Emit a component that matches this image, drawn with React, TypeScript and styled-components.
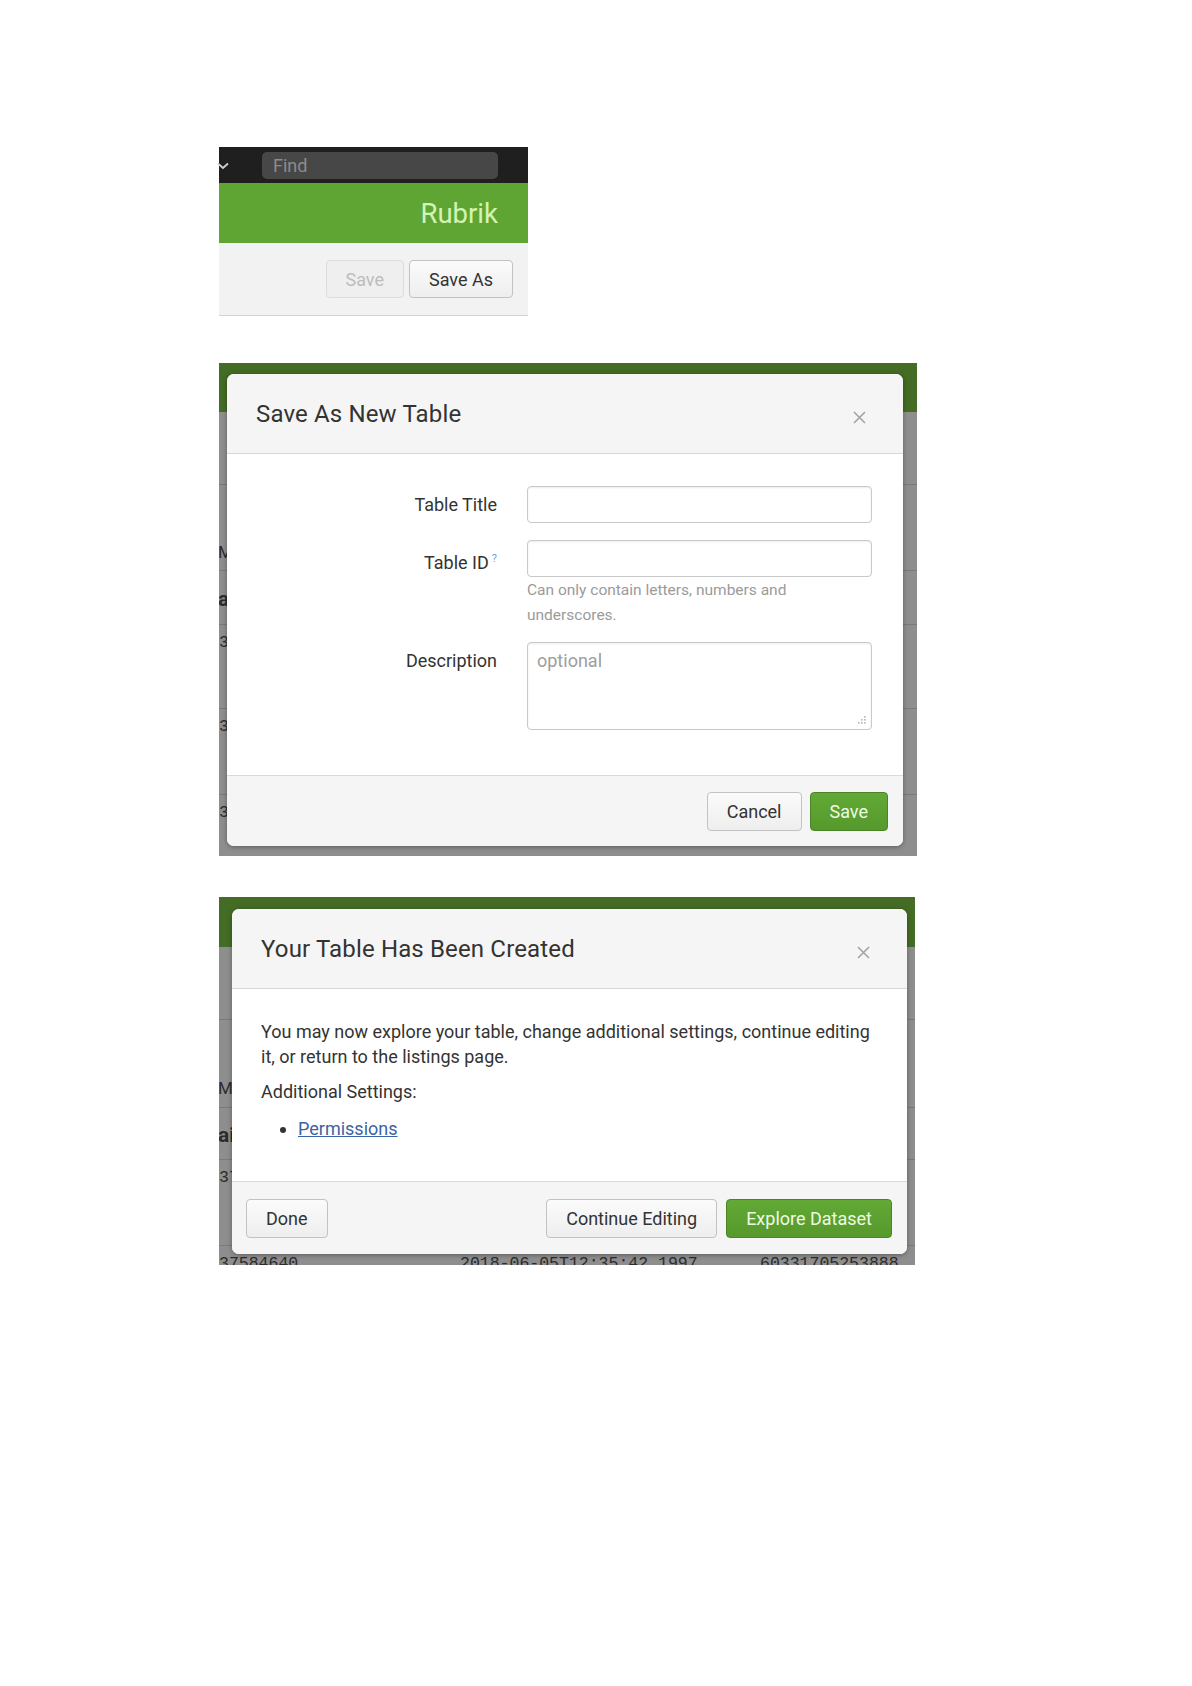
import React from "react";
import styled, { createGlobalStyle } from "styled-components";

const GlobalStyle = createGlobalStyle`
  body {
    margin: 0;
    background: #fff;
    font-family: Roboto, "Liberation Sans", sans-serif;
  }
`;

type Row = { h: number; a?: string; b?: string; c?: string; kind?: "mono" | "bold" | "plain"; pt: number };

const rows1: Row[] = [
  { h: 73, pt: 20 },
  { h: 86, a: "M", kind: "plain", pt: 57 },
  { h: 54, a: "ai", kind: "bold", pt: 18 },
  { h: 84, a: "37584640", kind: "mono", pt: 8 },
  { h: 86, a: "37584640", kind: "mono", pt: 8 },
  { h: 86, a: "37584640", kind: "mono", pt: 8 },
];

const rows2: Row[] = [
  { h: 73, pt: 20 },
  { h: 88, a: "M", kind: "plain", pt: 58 },
  { h: 52, a: "ai", kind: "bold", pt: 17 },
  { h: 86, a: "37584640", kind: "mono", pt: 8 },
  {
    h: 60,
    a: "37584640",
    b: "2018-06-05T12:35:42.1997",
    c: "60331705253888",
    kind: "mono",
    pt: 8,
  },
];

const Chevron = () => (
  <svg width="12" height="8" viewBox="0 0 12 8">
    <polyline points="1,1.5 6,6 11,1.5" fill="none" stroke="#cfcfcf" strokeWidth="1.8" />
  </svg>
);

const CloseIcon = () => (
  <svg width="13" height="13" viewBox="0 0 13 13">
    <path d="M1 1 L12 12 M12 1 L1 12" stroke="#a3a3a3" strokeWidth="1.6" />
  </svg>
);

const Grip = () => (
  <svg width="9" height="9" viewBox="0 0 9 9">
    <g fill="#b5b5b5">
      <rect x="7" y="1" width="1.6" height="1.6" />
      <rect x="4" y="4" width="1.6" height="1.6" />
      <rect x="7" y="4" width="1.6" height="1.6" />
      <rect x="1" y="7" width="1.6" height="1.6" />
      <rect x="4" y="7" width="1.6" height="1.6" />
      <rect x="7" y="7" width="1.6" height="1.6" />
    </g>
  </svg>
);

const Backdrop = ({ band, rows }: { band: number; rows: Row[] }) => (
  <>
    <BackBand $h={band} />
    {rows.map((r, i) => (
      <BackRow key={i} $h={r.h} $pt={r.pt}>
        <BackCell $w={241} $kind={r.kind}>{r.a}</BackCell>
        <BackCell $w={300} $kind={r.kind}>{r.b}</BackCell>
        <BackCell $w={160} $kind={r.kind}>{r.c}</BackCell>
      </BackRow>
    ))}
  </>
);

const App = () => {
  return (
    <Page>
      <GlobalStyle />

      <AppBar>
        <TopBar>
          <ChevronHold>
            <Chevron />
          </ChevronHold>
          <FindBox>Find</FindBox>
        </TopBar>
        <BrandBar>Rubrik</BrandBar>
        <ActionBar>
          <Button $variant="disabled" $h={38}>Save</Button>
          <Button $h={38}>Save As</Button>
        </ActionBar>
      </AppBar>

      <Shot $w={698} $h={493} $mt={47}>
        <Backdrop band={49} rows={rows1} />
        <Dialog $left={8} $top={11} $w={676}>
          <DialogHeader>
            <DialogTitle>Save As New Table</DialogTitle>
            <CloseHold>
              <CloseIcon />
            </CloseHold>
          </DialogHeader>
          <FormBody>
            <Field $mt={0}>
              <Label>Table Title</Label>
              <TextInput type="text" />
            </Field>
            <Field $mt={17}>
              <Label>
                Table ID<Hint>?</Hint>
              </Label>
              <div>
                <TextInput type="text" />
                <Help>Can only contain letters, numbers and underscores.</Help>
              </div>
            </Field>
            <Field $mt={14}>
              <Label>Description</Label>
              <AreaHold>
                <TextArea placeholder="optional" />
                <GripHold>
                  <Grip />
                </GripHold>
              </AreaHold>
            </Field>
          </FormBody>
          <DialogFooter $h={71} $justify="flex-end">
            <ButtonGroup $gap={8}>
              <Button $h={39}>Cancel</Button>
              <Button $variant="primary" $h={39}>Save</Button>
            </ButtonGroup>
          </DialogFooter>
        </Dialog>
      </Shot>

      <Shot $w={696} $h={368} $mt={41}>
        <Backdrop band={50} rows={rows2} />
        <Dialog $left={13} $top={12} $w={675}>
          <DialogHeader>
            <DialogTitle>Your Table Has Been Created</DialogTitle>
            <CloseHold>
              <CloseIcon />
            </CloseHold>
          </DialogHeader>
          <MessageBody>
            <Para>
              You may now explore your table, change additional settings, continue editing it, or
              return to the listings page.
            </Para>
            <Para $mt={10}>Additional Settings:</Para>
            <LinkList>
              <li>
                <PlainLink href="#">Permissions</PlainLink>
              </li>
            </LinkList>
          </MessageBody>
          <DialogFooter $h={73} $justify="space-between">
            <Button $h={39}>Done</Button>
            <ButtonGroup $gap={9}>
              <Button $h={39}>Continue Editing</Button>
              <Button $variant="primary" $h={39}>Explore Dataset</Button>
            </ButtonGroup>
          </DialogFooter>
        </Dialog>
      </Shot>
    </Page>
  );
};

export default App;

const Page = styled.div`
  display: flex;
  flex-direction: column;
  align-items: flex-start;
  padding: 147px 0 420px 219px;
`;

const AppBar = styled.div`
  width: 309px;
`;

const TopBar = styled.div`
  height: 36px;
  background-color: #1f1f1f;
  display: flex;
  align-items: center;
  padding-right: 30px;
`;

const ChevronHold = styled.div`
  display: flex;
  margin-left: -2px;
  margin-top: 2px;
`;

const FindBox = styled.div`
  margin-left: auto;
  width: 236px;
  height: 27px;
  box-sizing: border-box;
  border-radius: 5px;
  background-color: #474747;
  color: #8c8c8c;
  font-size: 18px;
  line-height: 27px;
  padding-left: 11px;
`;

const BrandBar = styled.div`
  height: 60px;
  background-color: #5fa533;
  color: #d3f4b4;
  font-size: 27.5px;
  display: flex;
  align-items: center;
  justify-content: flex-end;
  padding-right: 30px;
`;

const ActionBar = styled.div`
  height: 73px;
  box-sizing: border-box;
  background-color: #f2f2f2;
  border-bottom: 1px solid #d2d2d2;
  display: flex;
  align-items: center;
  justify-content: flex-end;
  gap: 5px;
  padding-right: 15px;
`;

const Button = styled.button<{ $variant?: "default" | "primary" | "disabled"; $h: number }>`
  height: ${(p) => p.$h}px;
  padding: 0 19px;
  font-family: Roboto, "Liberation Sans", sans-serif;
  font-size: 18px;
  border-radius: 4px;
  cursor: pointer;
  ${(p) =>
    p.$variant === "primary"
      ? `
    background: linear-gradient(#62a936, #56992c);
    border: 1px solid #4a8424;
    color: #eefbe3;
  `
      : p.$variant === "disabled"
      ? `
    background: #efefef;
    border: 1px solid #dcdcdc;
    color: #bdbdbd;
  `
      : `
    background: linear-gradient(#fbfbfb, #eeeeee);
    border: 1px solid #c2c2c2;
    color: #333;
  `}
`;

const ButtonGroup = styled.div<{ $gap: number }>`
  display: flex;
  gap: ${(p) => p.$gap}px;
`;

const Shot = styled.div<{ $w: number; $h: number; $mt: number }>`
  position: relative;
  width: ${(p) => p.$w}px;
  height: ${(p) => p.$h}px;
  margin-top: ${(p) => p.$mt}px;
  overflow: hidden;
  background-color: #8e8e8e;
`;

const BackBand = styled.div<{ $h: number }>`
  height: ${(p) => p.$h}px;
  background-color: #446c24;
`;

const BackRow = styled.div<{ $h: number; $pt: number }>`
  height: ${(p) => p.$h}px;
  box-sizing: border-box;
  border-bottom: 1px solid #7a7a7a;
  padding-top: ${(p) => p.$pt}px;
  display: flex;
`;

const BackCell = styled.div<{ $w: number; $kind?: "mono" | "bold" | "plain" }>`
  width: ${(p) => p.$w}px;
  flex-shrink: 0;
  white-space: nowrap;
  color: #2c2c2c;
  line-height: 20px;
  font-family: ${(p) =>
    p.$kind === "mono" ? `"Liberation Mono", monospace` : `Roboto, "Liberation Sans", sans-serif`};
  font-size: ${(p) => (p.$kind === "bold" ? 21 : p.$kind === "mono" ? 16.5 : 17)}px;
  font-weight: ${(p) => (p.$kind === "bold" ? 700 : 400)};
  margin-left: ${(p) => (p.$kind === "mono" ? 0 : -1)}px;
`;

const Dialog = styled.div<{ $left: number; $top: number; $w: number }>`
  position: absolute;
  left: ${(p) => p.$left}px;
  top: ${(p) => p.$top}px;
  width: ${(p) => p.$w}px;
  background-color: #fff;
  border-radius: 7px;
  overflow: hidden;
  box-shadow: 0 1px 5px rgba(0, 0, 0, 0.35);
`;

const DialogHeader = styled.div`
  height: 80px;
  box-sizing: border-box;
  background-color: #f5f5f5;
  border-bottom: 1px solid #d7d7d7;
  display: flex;
  align-items: center;
  justify-content: space-between;
  padding: 0 37px 0 29px;
`;

const DialogTitle = styled.h3`
  margin: 0;
  font-size: 24px;
  letter-spacing: 0.15px;
  font-weight: 400;
  color: #333;
`;

const CloseHold = styled.div`
  display: flex;
  margin-top: 8px;
`;

const FormBody = styled.div`
  padding: 32px 0 45px 0;
`;

const Field = styled.div<{ $mt: number }>`
  display: grid;
  grid-template-columns: 270px 345px;
  column-gap: 30px;
  margin-top: ${(p) => p.$mt}px;
`;

const Label = styled.label`
  text-align: right;
  font-size: 18px;
  line-height: 37px;
  color: #333;
`;

const Hint = styled.sup`
  color: #6f9fd4;
  font-size: 11px;
  margin-left: 3px;
`;

const TextInput = styled.input`
  display: block;
  width: 345px;
  height: 37px;
  box-sizing: border-box;
  border: 1px solid #c9c9c9;
  border-radius: 4px;
  box-shadow: inset 0 1px 2px rgba(0, 0, 0, 0.08);
  background: #fff;
`;

const Help = styled.div`
  max-width: 300px;
  margin-top: 1px;
  font-size: 15.5px;
  line-height: 25px;
  color: #9b9b9b;
`;

const AreaHold = styled.div`
  position: relative;
  height: 88px;
`;

const TextArea = styled.textarea`
  width: 345px;
  height: 88px;
  box-sizing: border-box;
  border: 1px solid #c9c9c9;
  border-radius: 4px;
  box-shadow: inset 0 1px 2px rgba(0, 0, 0, 0.08);
  padding: 7px 9px;
  resize: none;
  font-family: Roboto, "Liberation Sans", sans-serif;
  font-size: 18px;
  &::placeholder {
    color: #9d9d9d;
  }
`;

const GripHold = styled.div`
  position: absolute;
  right: 6px;
  bottom: 6px;
  display: flex;
`;

const DialogFooter = styled.div<{ $h: number; $justify: string }>`
  height: ${(p) => p.$h}px;
  box-sizing: border-box;
  background-color: #f5f5f5;
  border-top: 1px solid #dadada;
  display: flex;
  align-items: center;
  justify-content: ${(p) => p.$justify};
  padding: 0 15px 0 14px;
`;

const MessageBody = styled.div`
  padding: 30px 29px 40px;
  font-size: 18px;
  line-height: 25px;
  color: #333;
`;

const Para = styled.p<{ $mt?: number }>`
  margin: ${(p) => p.$mt || 0}px 0 0;
`;

const LinkList = styled.ul`
  margin: 12px 0 0;
  padding-left: 37px;
`;

const PlainLink = styled.a`
  color: #3b64a4;
  text-decoration: underline;
`;
